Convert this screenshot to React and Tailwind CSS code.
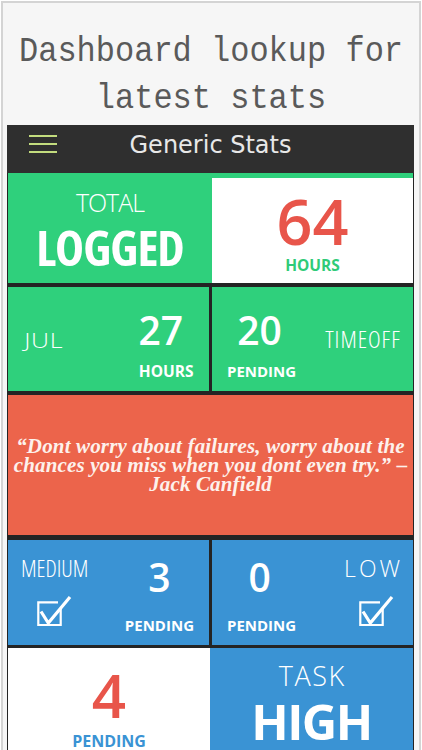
import React from "react";

function CheckBox() {
  return (
    <svg width="36" height="32" viewBox="0 0 36 32" fill="none" stroke="white">
      <path d="M22 7.3H2.3V30H24.7V13" strokeWidth="2.2" />
      <path d="M5 16.5L12.3 28L34 2" strokeWidth="3.2" />
    </svg>
  );
}

export default function App() {
  return (
    <div className="w-[422px] h-[750px] overflow-hidden bg-white pt-[1px] px-[1px] font-['Open_Sans',sans-serif]">
      <div className="h-[749px] border-2 border-b-0 border-[#d4d4d4] bg-[#f6f6f6]">
        <div className="mt-[25px] text-center font-['Liberation_Mono',monospace] text-[32px] leading-[47px] text-[#5a5a5a]">
          <div className="scale-y-[1.12]">Dashboard lookup for</div>
          <div className="scale-y-[1.12]">latest stats</div>
        </div>
        <div className="ml-[4px] mt-[3px] w-[407px] bg-[#242424] pb-[20px]">
          <div className="grid h-[48px] grid-cols-[1fr_auto_1fr] bg-[#2f2f2f]">
            <div className="flex flex-col gap-[6px] pl-[22px] pt-[10px]">
              <div className="h-[2px] w-[28px] bg-[#c3dc7e]" />
              <div className="h-[2px] w-[28px] bg-[#c3dc7e]" />
              <div className="h-[2px] w-[28px] bg-[#c3dc7e]" />
            </div>
            <div className="font-['DejaVu_Sans',sans-serif] text-[24px] leading-[40px] text-[#e8e8e8]">
              Generic Stats
            </div>
            <div />
          </div>

          <div className="px-[1px]">
            {/* Row 1 */}
            <div className="flex h-[110px] bg-[#2fd07c]">
              <div className="flex w-[204px] flex-col items-center pt-[17px] text-white">
                <div className="text-[25px] leading-none font-light tracking-[-1px]">TOTAL</div>
                <div className="mt-[8px] text-[49px] leading-none font-bold font-stretch-condensed tracking-[-1px]">LOGGED</div>
              </div>
              <div className="mt-[5px] flex flex-1 flex-col items-center bg-white pt-[11px]">
                <div className="text-[63px] leading-none font-semibold text-[#e8554a]">64</div>
                <div className="mt-[6px] text-[15.5px] leading-none font-bold text-[#2fcb78]">HOURS</div>
              </div>
            </div>

            {/* Row 2 */}
            <div className="mt-[4px] flex h-[104px] gap-[3px] text-white">
              <div className="flex w-[201px] bg-[#2fd07c]">
                <div className="pl-[13px] pt-[44px] text-[20px] leading-none font-light tracking-[0.5px] origin-left scale-x-[1.25]">JUL</div>
                <div className="ml-auto mr-[15px] flex flex-col items-center pt-[23px]">
                  <div className="mr-[11px] text-[39px] leading-none font-semibold">27</div>
                  <div className="mt-[15px] text-[15.5px] leading-none font-bold">HOURS</div>
                </div>
              </div>
              <div className="flex flex-1 bg-[#2fd07c]">
                <div className="ml-[15px] flex flex-col items-center pt-[23px]">
                  <div className="mr-[4px] text-[39px] leading-none font-semibold">20</div>
                  <div className="mt-[15px] text-[15px] leading-none font-bold">PENDING</div>
                </div>
                <div className="ml-auto pr-[13px] pt-[40px] text-[24px] leading-none font-light font-stretch-condensed tracking-[1px] mr-[-1px]">TIMEOFF</div>
              </div>
            </div>

            {/* Quote */}
            <div className="mt-[4px] flex h-[140px] items-center justify-center bg-[#ec644b] text-center font-['Liberation_Serif',serif] text-[21px] leading-[19px] font-bold italic tracking-[0.15px] text-[#fdf1ec]">
              <div>
                <div className="whitespace-nowrap">“Dont worry about failures, worry about the</div>
                <div className="whitespace-nowrap">chances you miss when you dont even try.” –</div>
                <div className="whitespace-nowrap">Jack Canfield</div>
              </div>
            </div>

            {/* Row 4 */}
            <div className="mt-[5px] flex h-[105px] gap-[3px] text-white">
              <div className="flex w-[201px] bg-[#3a93d4]">
                <div className="flex flex-col pl-[13px] pt-[17px]">
                  <div className="text-[23px] leading-none font-light font-stretch-condensed">MEDIUM</div>
                  <div className="ml-[15px] mt-[15px]">
                    <CheckBox />
                  </div>
                </div>
                <div className="ml-auto mr-[15px] flex flex-col items-center pt-[17px]">
                  <div className="text-[39px] leading-none font-semibold">3</div>
                  <div className="mt-[22px] text-[15px] leading-none font-bold">PENDING</div>
                </div>
              </div>
              <div className="flex flex-1 bg-[#3a93d4]">
                <div className="ml-[15px] flex flex-col items-center pt-[17px]">
                  <div className="mr-[4px] text-[39px] leading-none font-semibold">0</div>
                  <div className="mt-[22px] text-[15px] leading-none font-bold">PENDING</div>
                </div>
                <div className="ml-auto flex flex-col items-end pr-[13px] pt-[17px]">
                  <div className="text-[23px] leading-none font-light tracking-[3px] mr-[-3px]">LOW</div>
                  <div className="mr-[6px] mt-[15px]">
                    <CheckBox />
                  </div>
                </div>
              </div>
            </div>

            {/* Row 5 */}
            <div className="mt-[3px] flex h-[102px]">
              <div className="flex w-[202px] flex-col items-center bg-white pt-[17px]">
                <div className="text-[60px] leading-none font-semibold text-[#e8554a]">4</div>
                <div className="mt-[8px] text-[16px] leading-none font-bold text-[#3a93d4]">PENDING</div>
              </div>
              <div className="flex flex-1 flex-col items-center bg-[#3a93d4] pt-[14px] text-white">
                <div className="text-[27px] leading-none font-light tracking-[1.5px] mr-[-1.5px]">TASK</div>
                <div className="mt-[8px] text-[49px] leading-none font-bold tracking-[-1.5px]">HIGH</div>
              </div>
            </div>
          </div>
        </div>
      </div>
    </div>
  );
}
